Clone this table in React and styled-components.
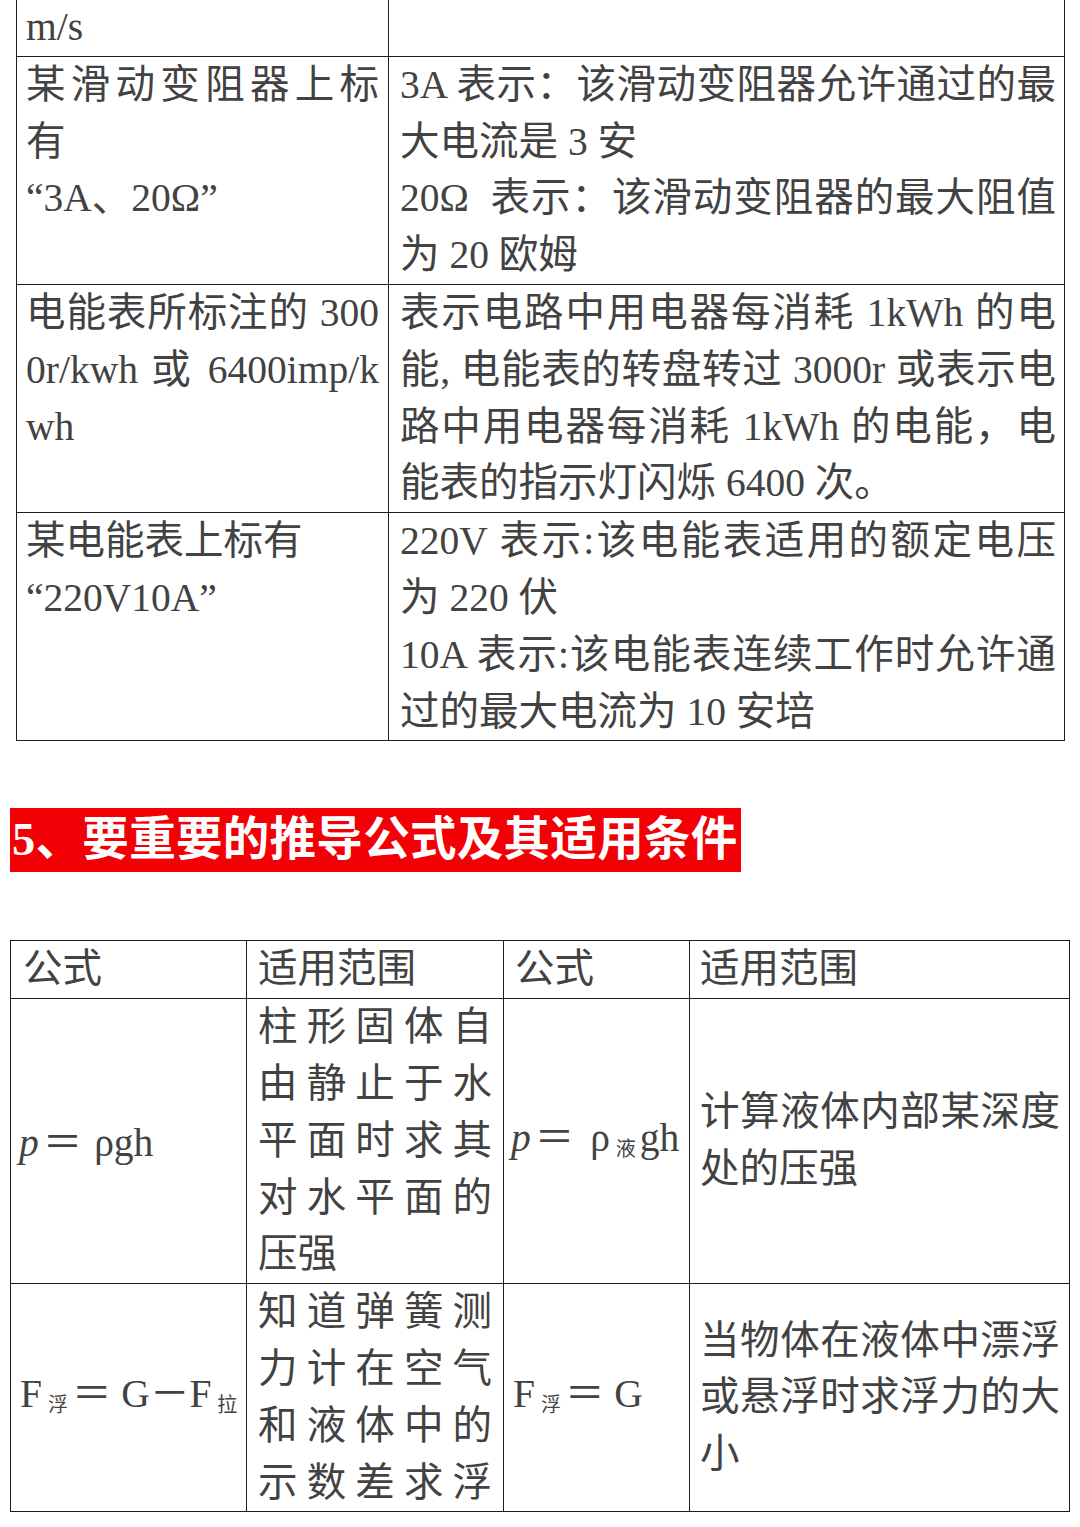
import React from "react";
import styled, { createGlobalStyle } from "styled-components";

const Global = createGlobalStyle`
  html, body { margin: 0; padding: 0; background: #ffffff; }
  body {
    font-family: "Liberation Serif", "Noto Sans CJK SC", sans-serif;
    color: #424242;
  }
`;

const Page = styled.div`
  display: flex;
  flex-direction: column;
  align-items: flex-start;
  margin-top: -2px;
  width: 1080px;
  overflow: hidden;
`;

const Table = styled.table`
  border-collapse: collapse;
  table-layout: fixed;
  width: ${(p) => p.$width}px;
  margin-left: ${(p) => p.$left}px;
  font-size: 39.5px;
  line-height: 56.8px;
`;

const Cell = styled.td`
  border: 1.5px solid #1e1e1e;
  padding: 0 ${(p) => p.$padR ?? 9}px 0 ${(p) => p.$padL ?? 9}px;
  vertical-align: ${(p) => p.$valign || "top"};
  text-align: justify;
  text-align-last: ${(p) => (p.$fill ? "justify" : "auto")};
  word-break: break-all;
  white-space: pre-wrap;
`;

const Para = styled.div`
  text-align: justify;
`;

const Heading = styled.h2`
  margin: 67px 0 68px 10px;
  padding: 0 3px 0 2px;
  height: 64px;
  line-height: 64px;
  background: #f20006;
  color: #ffffff;
  font-size: 46.5px;
  letter-spacing: 0.3px;
  font-weight: 700;
  font-family: "Liberation Serif", "Noto Sans CJK SC", sans-serif;
  white-space: nowrap;
`;

const Formula = styled.span`
  white-space: nowrap;
  text-align: left;
`;

const Var = styled.i`
  font-style: italic;
`;

const Sub = styled.span`
  font-size: 20px;
  vertical-align: -5px;
  margin: 0 4px 0 6px;
  font-family: "Noto Sans CJK SC", sans-serif;
`;

const Eq = styled.span`
  font-family: "Noto Sans CJK SC", sans-serif;
  margin: 0 ${(p) => p.$after ?? 0}px 0 ${(p) => p.$before ?? 0}px;
`;

export default function App() {
  return (
    <>
      <Global />
      <Page>
        <Table $width={1048} $left={16}>
          <colgroup>
            <col style={{ width: 372 }} />
            <col style={{ width: 676 }} />
          </colgroup>
          <tbody>
            <tr>
              <Cell>m/s</Cell>
              <Cell $padL={11} />
            </tr>
            <tr>
              <Cell>
                <Para>某滑动变阻器上标有</Para>
                <Para>“3A、20Ω”</Para>
              </Cell>
              <Cell $padL={11} $padR={8}>
                <Para>3A 表示：该滑动变阻器允许通过的最大电流是 3 安</Para>
                <Para>20Ω  表示：该滑动变阻器的最大阻值为 20 欧姆</Para>
              </Cell>
            </tr>
            <tr>
              <Cell>电能表所标注的 3000r/kwh 或 6400imp/kwh</Cell>
              <Cell $padL={11} $padR={8}>
                表示电路中用电器每消耗 1kWh 的电能, 电能表的转盘转过 3000r 或表示电路中用电器每消耗 1kWh 的电能，电能表的指示灯闪烁 6400 次。
              </Cell>
            </tr>
            <tr>
              <Cell>
                <Para>某电能表上标有</Para>
                <Para>“220V10A”</Para>
              </Cell>
              <Cell $padL={11} $padR={8}>
                <Para>220V 表示:该电能表适用的额定电压为 220 伏</Para>
                <Para>10A 表示:该电能表连续工作时允许通过的最大电流为 10 安培</Para>
              </Cell>
            </tr>
          </tbody>
        </Table>

        <Heading>5、要重要的推导公式及其适用条件</Heading>

        <Table $width={1059} $left={10}>
          <colgroup>
            <col style={{ width: 236 }} />
            <col style={{ width: 257 }} />
            <col style={{ width: 186 }} />
            <col style={{ width: 380 }} />
          </colgroup>
          <tbody>
            <tr>
              <Cell $padL={12}>公式</Cell>
              <Cell $padL={11}>适用范围</Cell>
              <Cell $padL={11}>公式</Cell>
              <Cell $padL={10}>适用范围</Cell>
            </tr>
            <tr>
              <Cell $valign="middle" $padL={8}>
                <Formula>
                  <Var>p</Var>
                  <Eq $before={4} $after={2}>＝</Eq> ρgh
                </Formula>
              </Cell>
              <Cell $padL={11} $padR={11}>
                柱形固体自由静止于水平面时求其对水平面的压强
              </Cell>
              <Cell $valign="middle" $padL={7} $padR={2}>
                <Formula>
                  <Var>p</Var>
                  <Eq $before={4} $after={6}>＝</Eq> ρ<Sub>液</Sub>gh
                </Formula>
              </Cell>
              <Cell $valign="middle" $padL={10} $padR={9}>
                计算液体内部某深度处的压强
              </Cell>
            </tr>
            <tr>
              <Cell $valign="middle" $padL={9} $padR={2}>
                <Formula>
                  F<Sub>浮</Sub>
                  <Eq>＝</Eq> G<Eq>－</Eq>F<Sub>拉</Sub>
                </Formula>
              </Cell>
              <Cell $padL={11} $padR={11} $fill>
                知道弹簧测力计在空气和液体中的示数差求浮
              </Cell>
              <Cell $valign="middle" $padL={9}>
                <Formula>
                  F<Sub>浮</Sub>
                  <Eq>＝</Eq> G
                </Formula>
              </Cell>
              <Cell $valign="middle" $padL={10} $padR={9}>
                当物体在液体中漂浮或悬浮时求浮力的大小
              </Cell>
            </tr>
          </tbody>
        </Table>
      </Page>
    </>
  );
}
